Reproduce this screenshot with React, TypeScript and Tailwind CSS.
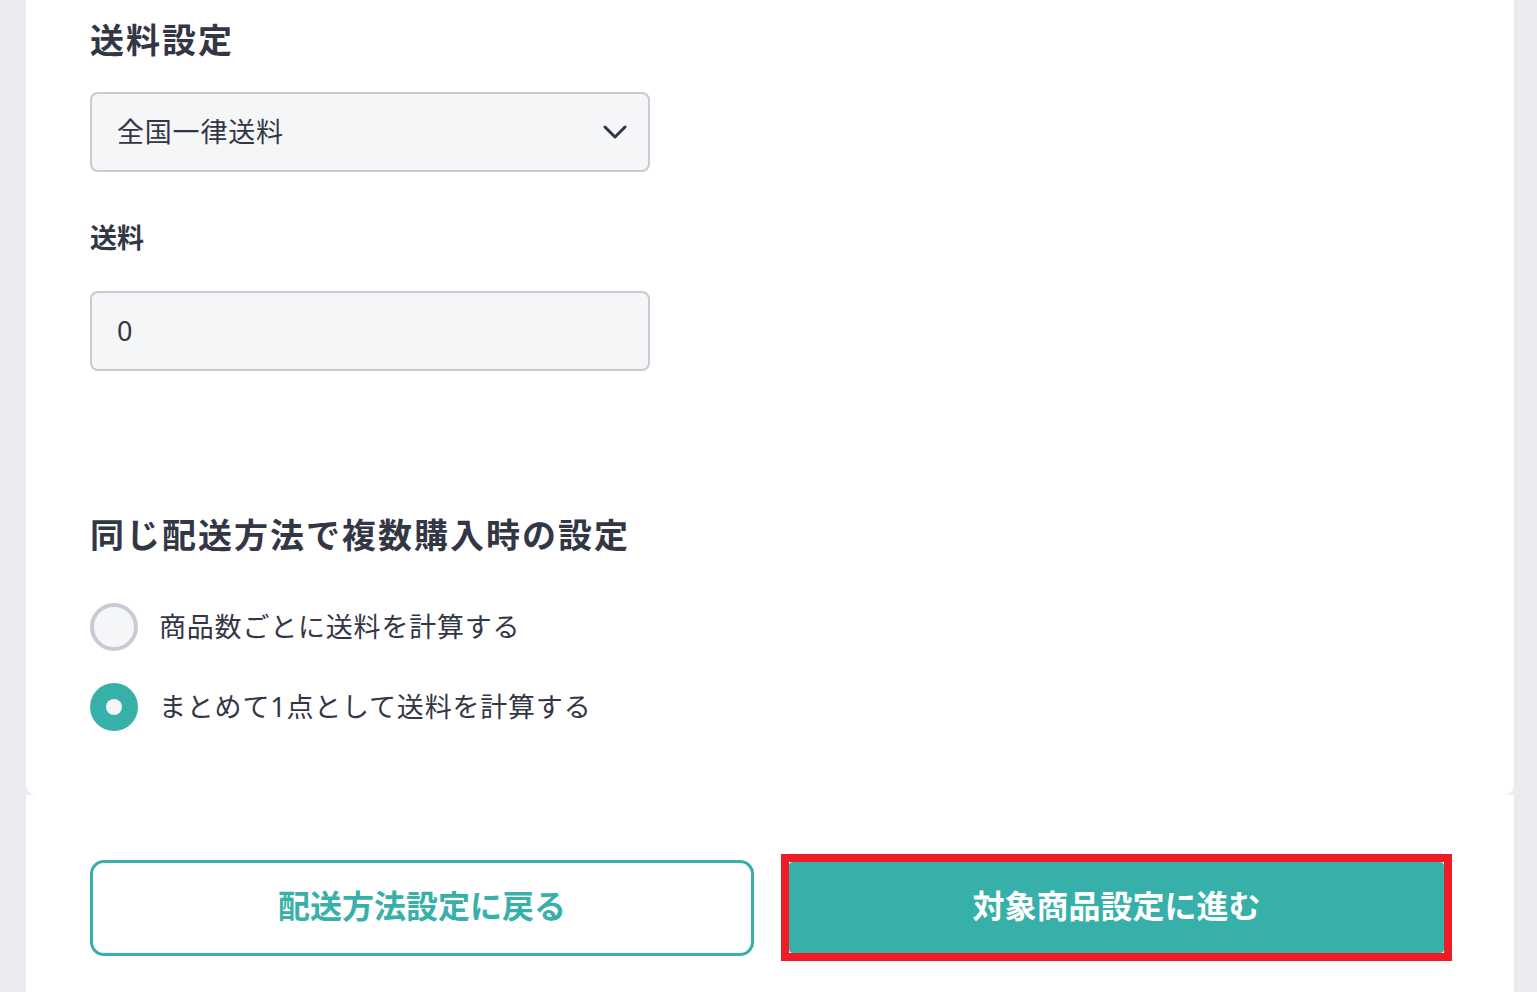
import React from 'react';

const font = { fontFamily: '"Noto Sans", "Noto Sans CJK JP", sans-serif' };

const Radio = ({ checked, label }: { checked: boolean; label: string }) => (
  <label className="flex items-center gap-[21px] h-[48px]">
    {checked ? (
      <span className="w-[48px] h-[48px] rounded-full bg-[#38b0aa] flex items-center justify-center">
        <span className="w-[16px] h-[16px] rounded-full bg-[#f5f6f8]"></span>
      </span>
    ) : (
      <span className="w-[48px] h-[48px] rounded-full border-[4px] border-[#c8cbd4] bg-[#f5f6f8]"></span>
    )}
    <span className="text-[27px] tracking-[0.8px] text-[#333645]">{label}</span>
  </label>
);

export default function App() {
  return (
    <div className="min-h-screen bg-[#ebecf0] pl-[26px] pr-[23px]" style={font}>
      {/* Form card */}
      <div className="bg-white rounded-b-[10px] pl-16 pt-4 pb-16">
        <h2 className="text-[34px] leading-[48px] font-bold tracking-[2px] text-[#333645]">送料設定</h2>

        <div className="mt-[28px] w-[560px] h-[80px] rounded-[8px] border-2 border-[#c8cbd4] bg-[#f5f6f8] flex items-center justify-between pl-[25px] pr-[21px]">
          <span className="text-[27px] tracking-[0.8px] text-[#333645]">全国一律送料</span>
          <svg width="24" height="14" viewBox="0 0 24 14" fill="none">
            <polyline points="2,2 12,12 22,2" stroke="#333645" strokeWidth="3" strokeLinecap="round" strokeLinejoin="round" />
          </svg>
        </div>

        <div className="mt-[46px] text-[27px] leading-[40px] font-bold text-[#333645]">送料</div>

        <div className="mt-[33px] w-[560px] h-[80px] rounded-[8px] border-2 border-[#c8cbd4] bg-[#f5f6f8] flex items-center pl-[25px]">
          <span className="text-[27px] text-[#333645]">0</span>
        </div>

        <h2 className="mt-[140px] text-[34px] leading-[48px] font-bold tracking-[2px] text-[#333645]">
          同じ配送方法で複数購入時の設定
        </h2>

        <div className="mt-[44px] flex flex-col gap-[32px]">
          <Radio checked={false} label="商品数ごとに送料を計算する" />
          <Radio checked={true} label="まとめて1点として送料を計算する" />
        </div>
      </div>

      {/* Footer buttons */}
      <div className="bg-white min-h-[197px] pl-16 pt-[59px] flex items-start">
        <div className="flex items-center">
          <button className="w-[664px] h-[96px] rounded-[14px] border-[3px] border-[#38b0aa] bg-white pb-[4px] text-[32px] font-bold text-[#38b0aa]">
            配送方法設定に戻る
          </button>
          <div className="ml-[27px] w-[671px] h-[107px] border-[8px] border-[#ee1c24] bg-white">
            <button className="w-full h-full rounded-[4px] bg-[#38b0aa] pb-[4px] text-[32px] font-bold text-white">
              対象商品設定に進む
            </button>
          </div>
        </div>
      </div>
    </div>
  );
}
